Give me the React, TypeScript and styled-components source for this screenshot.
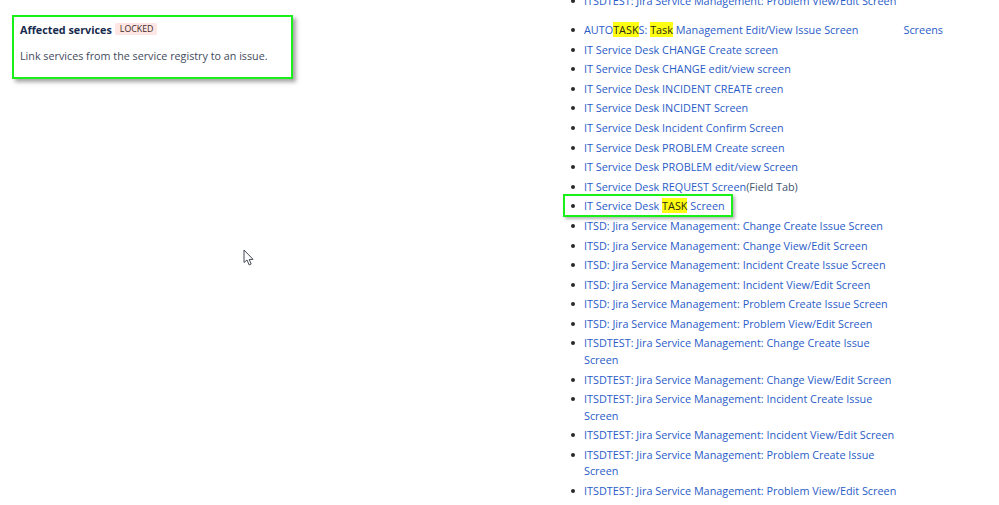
import React from "react";
import styled, { createGlobalStyle } from "styled-components";

const Global = createGlobalStyle`
  html, body { margin: 0; padding: 0; background: #fff; }
  body { font-family: "Open Sans", "Noto Sans", "Liberation Sans", sans-serif; font-size: 10.83px; }
`;

const Page = styled.div`
  position: relative;
  width: 999px;
  height: 505px;
  overflow: hidden;
  display: flex;
  background: #fff;
`;

const LeftColumn = styled.div`
  width: 584px;
  flex: none;
  padding: 15px 0 0 12px;
  box-sizing: border-box;
`;

const Card = styled.section`
  width: 277px;
  height: 60px;
  border: 2px solid #19f019;
  box-shadow: 3px 3px 4px rgba(90, 90, 90, 0.55);
  background: #fff;
  display: flex;
  flex-direction: column;
`;

const CardHead = styled.div`
  display: flex;
  align-items: center;
  gap: 3px;
  padding: 4px 0 0 6px;
  height: 18px;
`;

const Title = styled.h3`
  margin: 0;
  font-size: 10.8px;
  line-height: 16px;
  font-weight: 700;
  color: #172b4d;
`;

const Lozenge = styled.span`
  font-size: 8.8px;
  line-height: 12px;
  padding: 0 4px 0 5px;
  margin-top: -2px;
  border-radius: 2px;
  background: #fde6e3;
  color: #42261f;
`;

const CardText = styled.p`
  margin: 9px 0 0 6px;
  font-size: 10.75px;
  line-height: 17px;
  color: #3f4a5c;
`;

const List = styled.ul`
  list-style: none;
  margin: -7px 0 0;
  padding: 0;
  width: 318px;
  display: flex;
  flex-direction: column;
  gap: 3.1px;
`;

const Item = styled.li<{ $spaced?: boolean; $nowrap?: boolean }>`
  position: relative;
  line-height: 16.5px;
  font-size: 10.83px;
  color: #2a5cc8;
  margin-top: ${(p) => (p.$spaced ? "9.4px" : "0")};
  white-space: ${(p) => (p.$nowrap ? "nowrap" : "normal")};

  &::before {
    content: "";
    position: absolute;
    left: -13px;
    top: 6px;
    width: 4px;
    height: 4px;
    border-radius: 50%;
    background: #2a2a2a;
  }
`;

const Mark = styled.mark`
  background: #ffff14;
  color: #2a2a10;
`;

const Plain = styled.span`
  color: #42526e;
`;

const Aside = styled.span`
  margin-left: 45px;
`;

const HighlightBox = styled.div`
  position: absolute;
  left: 563px;
  top: 194px;
  width: 166px;
  height: 19px;
  border: 2px solid #19f019;
  box-shadow: 2px 2px 3px rgba(90, 90, 90, 0.45);
  pointer-events: none;
`;

const Cursor = styled.svg`
  position: absolute;
  left: 243px;
  top: 249px;
`;

const rows = [
  "IT Service Desk CHANGE Create screen",
  "IT Service Desk CHANGE edit/view screen",
  "IT Service Desk INCIDENT CREATE creen",
  "IT Service Desk INCIDENT Screen",
  "IT Service Desk Incident Confirm Screen",
  "IT Service Desk PROBLEM Create screen",
  "IT Service Desk PROBLEM edit/view Screen",
];

const lower = [
  "ITSD: Jira Service Management: Change Create Issue Screen",
  "ITSD: Jira Service Management: Change View/Edit Screen",
  "ITSD: Jira Service Management: Incident Create Issue Screen",
  "ITSD: Jira Service Management: Incident View/Edit Screen",
  "ITSD: Jira Service Management: Problem Create Issue Screen",
  "ITSD: Jira Service Management: Problem View/Edit Screen",
  "ITSDTEST: Jira Service Management: Change Create Issue Screen",
  "ITSDTEST: Jira Service Management: Change View/Edit Screen",
  "ITSDTEST: Jira Service Management: Incident Create Issue Screen",
  "ITSDTEST: Jira Service Management: Incident View/Edit Screen",
  "ITSDTEST: Jira Service Management: Problem Create Issue Screen",
  "ITSDTEST: Jira Service Management: Problem View/Edit Screen",
];

export default function App() {
  return (
    <Page>
      <Global />
      <LeftColumn>
        <Card>
          <CardHead>
            <Title>Affected services</Title>
            <Lozenge>LOCKED</Lozenge>
          </CardHead>
          <CardText>Link services from the service registry to an issue.</CardText>
        </Card>
      </LeftColumn>
      <List>
        <Item $nowrap>ITSDTEST: Jira Service Management: Problem View/Edit Screen</Item>
        <Item $spaced $nowrap>
          AUTO<Mark>TASK</Mark>S: <Mark>Task</Mark> Management Edit/View Issue Screen
          <Aside>Screens</Aside>
        </Item>
        {rows.map((r) => (
          <Item key={r}>{r}</Item>
        ))}
        <Item>
          IT Service Desk REQUEST Screen<Plain>(Field Tab)</Plain>
        </Item>
        <Item>
          IT Service Desk <Mark>TASK</Mark> Screen
        </Item>
        {lower.map((r) => (
          <Item key={r}>{r}</Item>
        ))}
      </List>
      <HighlightBox />
      <Cursor width="12" height="18" viewBox="0 0 12 18">
        <path d="M1 1 L1 13.5 L4 11 L6.2 16 L8.2 15 L6.2 10.5 L10 10.3 Z" fill="#fff" stroke="#444a55" strokeWidth="1" />
      </Cursor>
    </Page>
  );
}
